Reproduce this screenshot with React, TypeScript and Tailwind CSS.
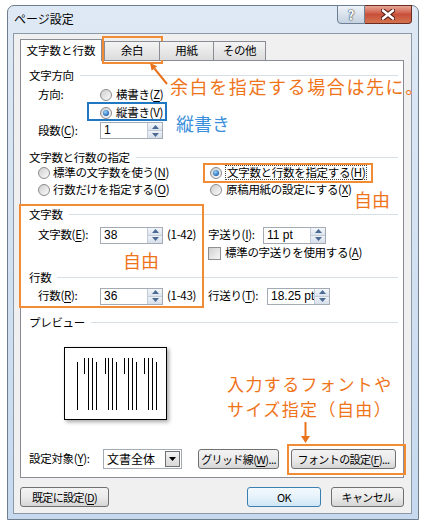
import React from "react";

const Radio = ({ checked }: { checked?: boolean }) => (
  <span className="w-[12px] h-[12px] rounded-full border border-[#8b8b8b] bg-gradient-to-br from-[#cfcfcf] to-[#fbfbfb] flex items-center justify-center shrink-0">
    {checked && (
      <span className="w-[6px] h-[6px] rounded-full bg-[radial-gradient(circle_at_40%_35%,#9ad8ff,#1a5fb0_75%)]" />
    )}
  </span>
);

const Spin = () => (
  <span className="w-[15px] h-full flex flex-col border-l border-[#c3cbd6] shrink-0">
    <span className="flex-1 flex items-center justify-center bg-gradient-to-b from-[#f4f7fa] to-[#dbe3ed] border-b border-[#c3cbd6]">
      <svg width="7" height="4" viewBox="0 0 7 4">
        <path d="M0 4 L3.5 0 L7 4Z" fill="#4b6b94" />
      </svg>
    </span>
    <span className="flex-1 flex items-center justify-center bg-gradient-to-b from-[#eef2f7] to-[#d6dfea]">
      <svg width="7" height="4" viewBox="0 0 7 4">
        <path d="M0 0 L3.5 4 L7 0Z" fill="#4b6b94" />
      </svg>
    </span>
  </span>
);

const Num = ({ v }: { v: string }) => (
  <div className="w-[63px] h-[17px] border border-[#a4abb5] bg-white flex shrink-0">
    <span className="flex-1 pl-[3px] leading-[15px] text-[12px] whitespace-nowrap overflow-hidden font-['Liberation_Sans',sans-serif] tracking-normal">
      {v}
    </span>
    <Spin />
  </div>
);

const Heading = ({ children, className }: { children: React.ReactNode; className: string }) => (
  <div className={`flex items-center h-[14px] ${className}`}>
    <span className="leading-[14px] whitespace-nowrap">{children}</span>
    <span className="flex-1 h-px bg-[#d5dfe5] ml-[6px]" />
  </div>
);

const U = ({ c }: { c: string }) => <span className="underline underline-offset-2">{c}</span>;

const Btn = ({ children, className }: { children: React.ReactNode; className: string }) => (
  <div
    className={`h-[20px] rounded-[3px] border border-[#707070] bg-gradient-to-b from-[#f3f3f3] via-[#ebebeb] to-[#d5d5d5] flex items-center justify-center text-[11px] tracking-[-0.6px] whitespace-nowrap leading-none shrink-0 ${className}`}
  >
    {children}
  </div>
);

const T = ({ children, className }: { children: React.ReactNode; className?: string }) => (
  <span className={`whitespace-nowrap ${className ?? ""}`}>{children}</span>
);

const lines: [number, number, number][] = [
  [13, 15, 63],
  [20, 11, 27],
  [24, 11, 63],
  [28, 11, 63],
  [32, 15, 63],
  [41, 11, 27],
  [44, 11, 63],
  [48, 11, 63],
  [52, 15, 63],
  [60, 11, 27],
  [64, 11, 63],
  [68, 11, 63],
  [72, 15, 63],
  [80, 11, 27],
  [84, 11, 63],
  [88, 11, 63],
  [92, 15, 63],
];

export default function App() {
  return (
    <div className="relative w-[431px] h-[524px] bg-white overflow-hidden font-['Noto_Sans_CJK_JP','Liberation_Sans',sans-serif] text-[11.5px] tracking-[-0.3px] text-black">
      {/* window */}
      <div className="ml-[7px] mt-[5px] w-[412px] h-[515px] rounded-t-[7px] border border-[#6f7e8e] bg-gradient-to-b from-[#dfe9f5] to-[#c6d9ee] flex flex-col pl-[5px] pr-[6px]">
        {/* title bar */}
        <div className="h-[27px] flex justify-between items-start shrink-0">
          <span className="pt-[5px] pl-[1px] text-[12px] leading-[16px] tracking-normal">ページ設定</span>
          <div className="flex -mt-px">
            <div className="w-[28px] h-[19px] rounded-bl-[4px] border border-[#6d7f93] bg-gradient-to-b from-[#eef3f8] to-[#c5d2e0] flex items-center justify-center text-white font-bold text-[13px] leading-none [text-shadow:0_0_2px_#23313f,0_0_1px_#23313f]">
              ?
            </div>
            <div className="w-[47px] h-[19px] rounded-br-[4px] border border-l-0 border-[#6b2b20] bg-gradient-to-b from-[#e8a796] via-[#c8503b] to-[#d4734f] flex items-center justify-center">
              <svg width="14" height="11" viewBox="0 0 14 11">
                <path d="M2 1.5 L12 9.5 M12 1.5 L2 9.5" stroke="#4a1a12" strokeWidth="4.5" strokeLinecap="round" />
                <path d="M2 1.5 L12 9.5 M12 1.5 L2 9.5" stroke="#ffffff" strokeWidth="2.6" strokeLinecap="round" />
              </svg>
            </div>
          </div>
        </div>

        {/* client */}
        <div className="h-[481px] border border-[#8b99a8] bg-[#f0f0f0] flex flex-col pl-[6px] pr-[7px]">
          {/* tabs */}
          <div className="flex items-end h-[26px] relative z-10 shrink-0">
            <div className="w-[82px] h-[22px] -mb-px bg-white border border-b-0 border-[#898c95] flex items-center justify-center whitespace-nowrap tracking-normal">
              文字数と行数
            </div>
            <div className="w-[56px] h-[19px] ml-[2px] border border-b-0 border-[#898c95] bg-gradient-to-b from-[#f4f4f4] to-[#dcdcdc] flex items-center justify-center">
              余白
            </div>
            <div className="w-[55px] h-[19px] -ml-px border border-b-0 border-[#898c95] bg-gradient-to-b from-[#f4f4f4] to-[#dcdcdc] flex items-center justify-center">
              用紙
            </div>
            <div className="w-[53px] h-[19px] -ml-px border border-b-0 border-[#898c95] bg-gradient-to-b from-[#f4f4f4] to-[#dcdcdc] flex items-center justify-center">
              その他
            </div>
          </div>

          {/* panel */}
          <div className="h-[418px] border border-[#898c95] bg-white flex flex-col pl-[8px] pr-[5px] shrink-0">
            <Heading className="mt-[7px]">文字方向</Heading>
            <div className="mt-[4px] h-[18px] flex items-center">
              <T className="ml-[9px] w-[62px]">方向:</T>
              <Radio />
              <T className="ml-[4px]">
                横書き(<U c="Z" />)
              </T>
            </div>
            <div className="h-[18px] flex items-center">
              <span className="ml-[71px]" />
              <Radio checked />
              <T className="ml-[4px]">
                縦書き(<U c="V" />)
              </T>
            </div>
            <div className="h-[17px] flex items-center">
              <T className="ml-[9px] w-[62px]">
                段数(<U c="C" />):
              </T>
              <Num v="1" />
            </div>

            <Heading className="mt-[11px]">文字数と行数の指定</Heading>
            <div className="h-[17px] flex items-center">
              <div className="ml-[9px] w-[172px] flex items-center">
                <Radio />
                <T className="ml-[3px]">
                  標準の文字数を使う(<U c="N" />)
                </T>
              </div>
              <Radio checked />
              <T className="ml-[3px] border border-dotted border-[#444] leading-[13px] px-px">
                文字数と行数を指定する(<U c="H" />)
              </T>
            </div>
            <div className="h-[18px] flex items-center">
              <div className="ml-[9px] w-[172px] flex items-center">
                <Radio />
                <T className="ml-[3px]">
                  行数だけを指定する(<U c="O" />)
                </T>
              </div>
              <Radio />
              <T className="ml-[4px]">
                原稿用紙の設定にする(<U c="X" />)
              </T>
            </div>

            <Heading className="mt-[8px]">文字数</Heading>
            <div className="mt-[5px] h-[18px] flex items-center">
              <T className="ml-[9px] w-[62px]">
                文字数(<U c="E" />):
              </T>
              <Num v="38" />
              <T className="ml-[4px] w-[41px]">(1-42)</T>
              <T className="w-[55px]">
                字送り(<U c="I" />):
              </T>
              <Num v="11 pt" />
            </div>
            <div className="h-[18px] flex items-center">
              <span className="ml-[179px] w-[13px] h-[13px] border border-[#8e8f8f] bg-gradient-to-br from-[#d0d0d0] to-[#f7f7f7] shrink-0" />
              <T className="ml-[4px]">
                標準の字送りを使用する(<U c="A" />)
              </T>
            </div>

            <Heading className="mt-[8px]">行数</Heading>
            <div className="mt-[3px] h-[18px] flex items-center">
              <T className="ml-[9px] w-[62px]">
                行数(<U c="R" />):
              </T>
              <Num v="36" />
              <T className="ml-[4px] w-[41px]">(1-43)</T>
              <T className="w-[59px]">
                行送り(<U c="T" />):
              </T>
              <Num v="18.25 pt" />
            </div>

            <Heading className="mt-[10px]">プレビュー</Heading>
            <div className="mt-[18px] ml-[35px] w-[103px] h-[73px] border border-black bg-white shadow-[2px_2px_4px_rgba(0,0,0,0.35)] shrink-0">
              <svg width="101" height="71" viewBox="1 1 101 71">
                {lines.map(([x, a, b], i) => (
                  <line key={i} x1={x + 0.5} y1={a} x2={x + 0.5} y2={b} stroke="#000" strokeWidth="1" />
                ))}
              </svg>
            </div>

            <div className="mt-[29px] h-[20px] flex items-center">
              <T className="w-[74px]">
                設定対象(<U c="Y" />):
              </T>
              <div className="w-[79px] h-[20px] border border-[#a4abb5] bg-white flex items-center shrink-0">
                <T className="flex-1 pl-[3px] text-[12px] tracking-normal">文書全体</T>
                <span className="w-[15px] h-[16px] mr-[1px] border border-[#707070] bg-gradient-to-b from-[#f3f3f3] to-[#d8d8d8] flex items-center justify-center">
                  <svg width="7" height="4" viewBox="0 0 7 4">
                    <path d="M0 0 L3.5 4 L7 0Z" fill="#000" />
                  </svg>
                </span>
              </div>
              <Btn className="ml-[16px] w-[81px]">
                グリッド線(<U c="W" />)...
              </Btn>
              <Btn className="ml-[12px] w-[105px]">
                フォントの設定(<U c="F" />)...
              </Btn>
            </div>
          </div>

          {/* bottom buttons */}
          <div className="mt-[9px] h-[20px] flex items-center shrink-0">
            <Btn className="w-[89px]">
              既定に設定(<U c="D" />)
            </Btn>
            <Btn className="ml-auto w-[74px] !border-[#3c7fb1] !from-[#f3f9fe] !via-[#e6f2fb] !to-[#cfe6f6]">OK</Btn>
            <Btn className="ml-[10px] w-[73px]">キャンセル</Btn>
          </div>
        </div>
      </div>

      {/* annotations */}
      <div className="absolute left-[102px] top-[36px] w-[61px] h-[28px] border-2 border-[#f28c34]" />
      <svg className="absolute left-[145px] top-[60px]" width="30" height="30" viewBox="0 0 30 30">
        <line x1="22" y1="24" x2="9.4" y2="8.5" stroke="#e8731d" strokeWidth="2" />
        <polygon points="5,3 12.1,6.3 6.7,10.7" fill="#e8731d" />
      </svg>
      <div className="absolute left-[170px] top-[77px] text-[18px] leading-none tracking-[1.6px] text-[#ef7419] whitespace-nowrap">
        余白を指定する場合は先に。
      </div>

      <div className="absolute left-[87px] top-[102px] w-[80px] h-[19px] border-2 border-[#1f78c1]" />
      <div className="absolute left-[176px] top-[114px] text-[18px] leading-none tracking-normal text-[#3b8fdb] whitespace-nowrap">
        縦書き
      </div>

      <div className="absolute left-[203px] top-[163px] w-[170px] h-[20px] border-2 border-[#f28c34]" />
      <div className="absolute left-[354px] top-[190px] text-[18px] leading-none tracking-normal text-[#ef7419] whitespace-nowrap">
        自由
      </div>

      <div className="absolute left-[19px] top-[204px] w-[185px] h-[104px] border-2 border-[#f28c34]" />
      <div className="absolute left-[123px] top-[251px] text-[18px] leading-none tracking-normal text-[#ef7419] whitespace-nowrap">
        自由
      </div>

      <div className="absolute left-[227px] top-[375px] text-[17px] leading-none tracking-[1.4px] text-[#ef7419] whitespace-nowrap">
        入力するフォントや
      </div>
      <div className="absolute left-[227px] top-[400px] text-[17px] leading-none tracking-[1.4px] text-[#ef7419] whitespace-nowrap">
        サイズ指定（自由）
      </div>
      <svg className="absolute left-[300px] top-[422px]" width="11" height="23" viewBox="0 0 11 23">
        <line x1="5.5" y1="0" x2="5.5" y2="15" stroke="#e8731d" strokeWidth="2" />
        <polygon points="1,14 10,14 5.5,21" fill="#e8731d" />
      </svg>
      <div className="absolute left-[287px] top-[444px] w-[119px] h-[31px] border-2 border-[#f28c34]" />
    </div>
  );
}
